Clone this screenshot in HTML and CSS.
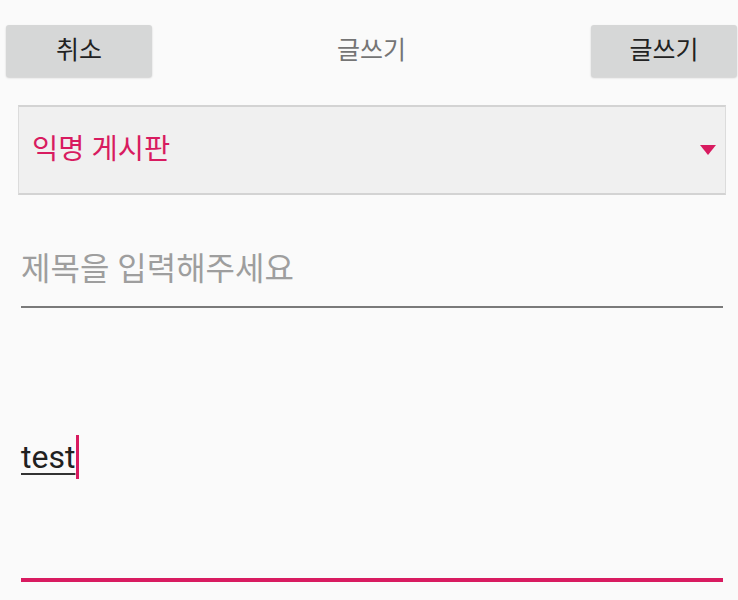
FILE: index.html
```html
<!DOCTYPE html>
<html lang="ko">
<head>
<meta charset="utf-8">
<title>글쓰기</title>
<link rel="stylesheet" href="styles.css">
</head>
<body>
<div class="screen">
  <header class="toolbar">
    <button class="btn">취소</button>
    <div class="title">글쓰기</div>
    <button class="btn">글쓰기</button>
  </header>
  <div class="spinner">
    <span class="spinner-text">익명 게시판</span>
    <span class="arrow"></span>
  </div>
  <div class="field title-field"><span class="hint">제목을 입력해주세요</span></div>
  <div class="field body-field"><span class="typed">test</span><span class="cursor"></span></div>
</div>
</body>
</html>
```
FILE: styles.css
```css
html, body {
  margin: 0;
  padding: 0;
  background: #fafafa;
}
.screen {
  width: 738px;
  height: 600px;
  font-family: Roboto, "Noto Sans CJK KR", sans-serif;
  overflow: hidden;
}
.toolbar {
  display: flex;
  align-items: center;
  padding: 25px 1px 0 6px;
  height: 52px;
}
.btn {
  width: 146px;
  height: 52px;
  border: none;
  border-radius: 3px;
  background: #d6d7d7;
  box-shadow: 0 1px 2px rgba(0, 0, 0, 0.18);
  color: #222;
  font-family: Roboto, "Noto Sans CJK KR", sans-serif;
  font-size: 25px;
  line-height: 52px;
  padding: 0;
  margin: 0;
}
.title {
  flex: 1;
  text-align: center;
  color: #757575;
  font-size: 25px;
  line-height: 52px;
  height: 52px;
}
.spinner {
  box-sizing: border-box;
  margin: 28px 12px 0 18px;
  height: 90px;
  background: #f0f0f0;
  border-top: 2px solid #d3d3d3;
  border-bottom: 2px solid #d3d3d3;
  border-left: 1px solid #dcdcdc;
  border-right: 1px solid #dcdcdc;
  display: flex;
  align-items: center;
  justify-content: space-between;
  padding: 0 9px 0 13px;
}
.spinner-text {
  color: #d81b60;
  font-size: 28.5px;
  line-height: 40px;
  height: 40px;
}
.arrow {
  width: 0;
  height: 0;
  border-left: 8.5px solid transparent;
  border-right: 8.5px solid transparent;
  border-top: 10px solid #d81b60;
}
.field {
  margin: 0 15px 0 21px;
}
.title-field {
  display: flex;
  padding: 54px 0 17px;
  border-bottom: 2px solid #7a7a7a;
}
.hint {
  display: block;
  color: #9e9e9e;
  font-size: 32px;
  line-height: 40px;
  height: 40px;
}
.body-field {
  padding: 127px 0 99px;
  border-bottom: 4px solid #d81b60;
  height: 44px;
  display: flex;
  align-items: flex-start;
}
.typed {
  display: block;
  height: 44px;
  line-height: 44px;
  color: #212121;
  font-size: 32px;
  text-decoration: underline;
  text-decoration-thickness: 2px;
  text-underline-offset: 5px;
  text-decoration-color: #333;
}
.cursor {
  width: 2.5px;
  height: 44px;
  margin-left: 1px;
  background: #d81b60;
}
```
